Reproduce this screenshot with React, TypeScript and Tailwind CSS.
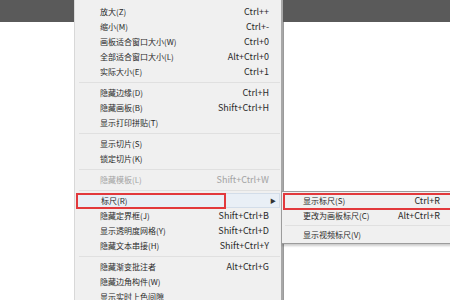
const FONT = { fontFamily: '"Segoe UI", "Noto Sans CJK SC", "Liberation Sans", sans-serif' };

type Item =
  | { sep: true }
  | { label: string; key?: string; disabled?: boolean; active?: boolean; sub?: boolean };

const MENU: Item[] = [
  { label: '放大(Z)', key: 'Ctrl++' },
  { label: '缩小(M)', key: 'Ctrl+-' },
  { label: '画板适合窗口大小(W)', key: 'Ctrl+0' },
  { label: '全部适合窗口大小(L)', key: 'Alt+Ctrl+0' },
  { label: '实际大小(E)', key: 'Ctrl+1' },
  { sep: true },
  { label: '隐藏边缘(D)', key: 'Ctrl+H' },
  { label: '隐藏画板(B)', key: 'Shift+Ctrl+H' },
  { label: '显示打印拼贴(T)' },
  { sep: true },
  { label: '显示切片(S)' },
  { label: '锁定切片(K)' },
  { sep: true },
  { label: '隐藏模板(L)', key: 'Shift+Ctrl+W', disabled: true },
  { sep: true },
  { label: '标尺(R)', active: true, sub: true },
  { label: '隐藏定界框(J)', key: 'Shift+Ctrl+B' },
  { label: '显示透明度网格(Y)', key: 'Shift+Ctrl+D' },
  { label: '隐藏文本串接(H)', key: 'Shift+Ctrl+Y' },
  { sep: true },
  { label: '隐藏渐变批注者', key: 'Alt+Ctrl+G' },
  { label: '隐藏边角构件(W)' },
  { label: '显示实时上色间隙' },
];

function Row({ item, pad }: { item: Exclude<Item, { sep: true }>; pad: string }) {
  return (
    <div
      className={`relative h-[15px] flex items-center justify-between ${pad} ${
        item.active ? 'bg-[#e9eff6] border border-[#d3dde9]' : ''
      } ${item.disabled ? 'text-[#a3a3a3]' : 'text-[#2a2a2a]'}`}
    >
      <span className="text-[8px] leading-none">{item.label}</span>
      {item.key && <span className="text-[9px] leading-none">{item.key}</span>}
      {item.sub && <span className="text-[6px] leading-none text-[#333] -mr-[8px]">▶</span>}
    </div>
  );
}

export default function App() {
  return (
    <div className="relative w-[450px] h-[300px] bg-white overflow-hidden" style={FONT}>
      <div className="h-[22px] bg-[#5a5a5a]" />
      <div className="flex h-[278px]">
        <div className="w-[283px]" />
        <div className="flex-1 border-l border-[#9a9a9a] bg-white" />
      </div>

      {/* main menu */}
      <div className="absolute left-[74px] top-0 w-[209px] h-[300px] bg-[#f0f0f0] border-l border-[#d8d8d8] border-r-2 border-r-[#a8a8a8] pt-[4px] px-[1px]">
        {MENU.map((item, i) =>
          'sep' in item ? (
            <div key={i} className="h-[6px] flex items-center pl-[3px]">
              <div className="h-px w-full bg-[#e0e0e0]" />
            </div>
          ) : (
            <Row key={i} item={item} pad="pl-[24px] pr-[11px]" />
          )
        )}
        {/* annotation box on 标尺 */}
        <div className="absolute left-[1px] top-[193px] w-[150px] h-[16px] border-2 border-[#e2393c]" />
      </div>

      {/* submenu */}
      <div className="absolute left-[281px] top-[191px] w-[176px] bg-[#f0f0f0] border border-[#9c9c9c] shadow-[1px_2px_2px_rgba(0,0,0,0.2)] py-[1px]">
        <Row item={{ label: '显示标尺(S)', key: 'Ctrl+R' }} pad="pl-[21px] pr-[16px]" />
        <Row item={{ label: '更改为画板标尺(C)', key: 'Alt+Ctrl+R' }} pad="pl-[21px] pr-[16px]" />
        <div className="h-[4px] flex items-center pl-[3px]">
          <div className="h-px w-full bg-[#e0e0e0]" />
        </div>
        <Row item={{ label: '显示视频标尺(V)' }} pad="pl-[21px] pr-[16px]" />
        <div className="absolute left-[1px] top-[1px] w-[172px] h-[17px] border-2 border-[#e2393c]" />
      </div>
    </div>
  );
}
